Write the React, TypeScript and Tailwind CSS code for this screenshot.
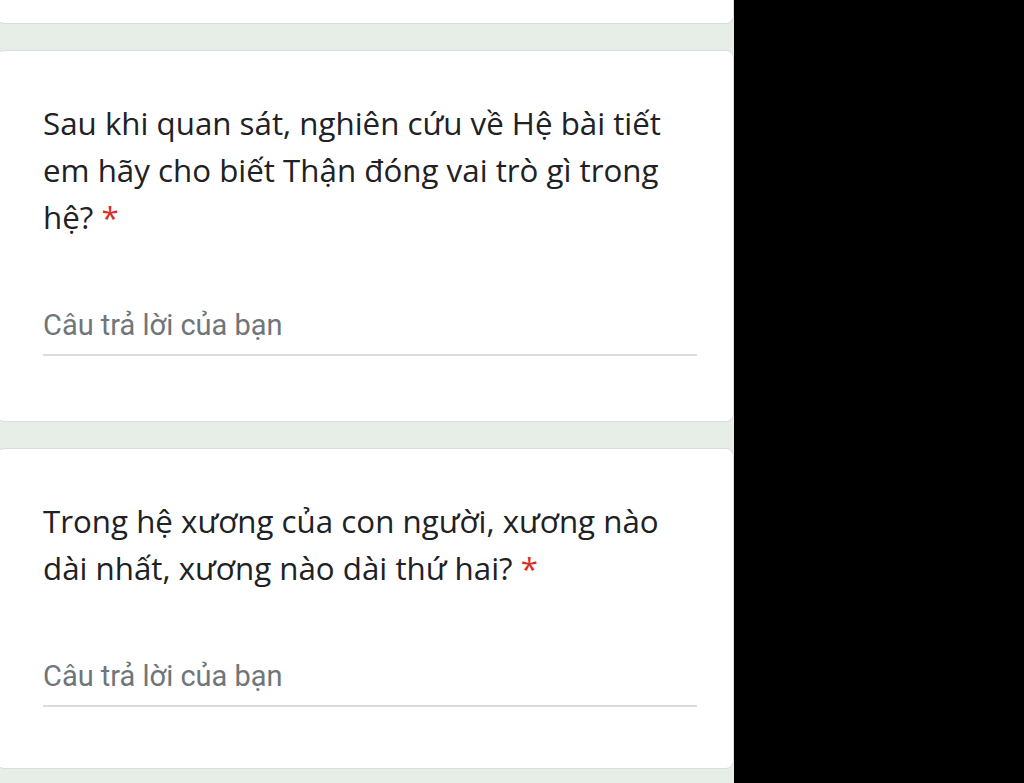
export default function App() {
  return (
    <div className="flex h-[783px] w-[1024px] overflow-hidden bg-black">
      <div className="flex w-[734px] flex-col gap-[26px] overflow-hidden bg-[#e6eee7]">
        <div className="-ml-1 -mt-4 h-[40px] shrink-0 rounded-lg border border-[#dadce0] bg-white" />
        <QuestionCard
          lines="Sau khi quan sát, nghiên cứu về Hệ bài tiết em hãy cho biết Thận đóng vai trò gì trong hệ?"
          height="h-[372px]"
        />
        <QuestionCard
          lines="Trong hệ xương của con người, xương nào dài nhất, xương nào dài thứ hai?"
          height="h-[321px]"
        />
      </div>
      <div className="flex-1 bg-black" />
    </div>
  );
}

function QuestionCard({ lines, height }: { lines: string; height: string }) {
  return (
    <div className={`-ml-1 shrink-0 rounded-lg border border-[#dadce0] bg-white pl-[46px] pr-[38px] pt-[49px] ${height}`}>
      <p
        className="w-[640px] text-[31.3px] leading-[47px] text-[#202124]"
        style={{ fontFamily: '"Open Sans", sans-serif' }}
      >
        {lines} <span className="text-[#d93025]">*</span>
      </p>
      <div className="mt-[65px] w-[654px] border-b-2 border-[#dadce0] pb-[10px]">
        <span
          className="text-[29px] leading-[38px] text-[#70757a]"
          style={{ fontFamily: "Roboto, sans-serif" }}
        >
          Câu trả lời của bạn
        </span>
      </div>
    </div>
  );
}
